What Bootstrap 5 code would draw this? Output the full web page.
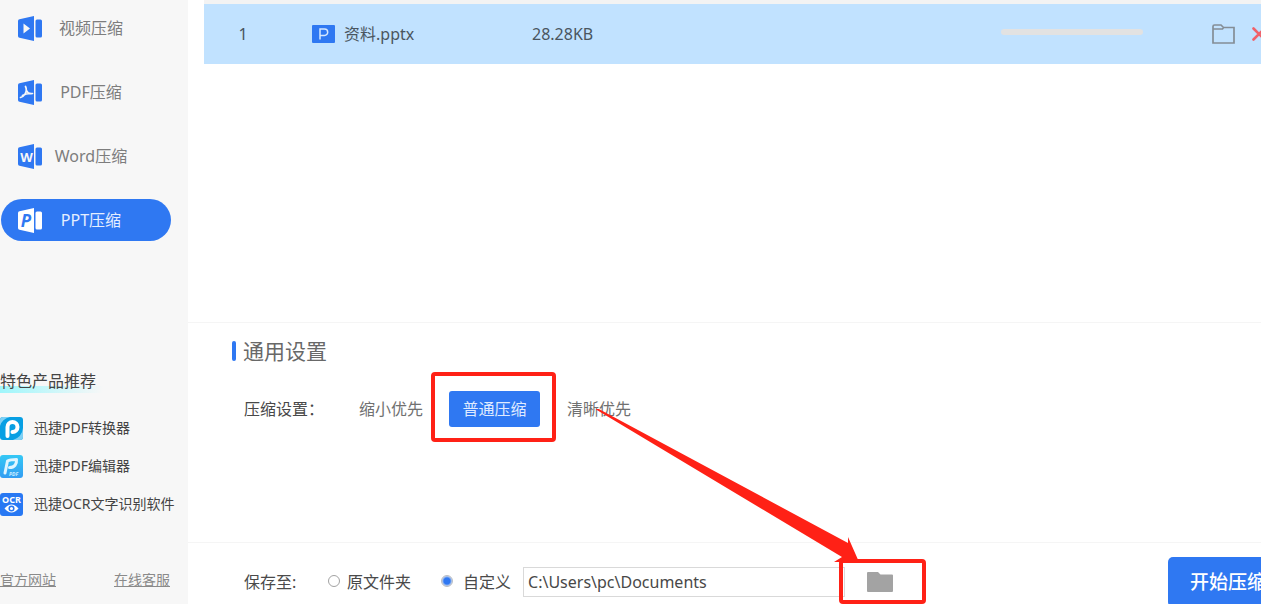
<!DOCTYPE html>
<html lang="zh-CN">
<head>
<meta charset="utf-8">
<meta name="viewport" content="width=device-width, initial-scale=1">
<title>PPT压缩</title>
<link href="https://cdn.jsdelivr.net/npm/bootstrap@5.3.0/dist/css/bootstrap.min.css" rel="stylesheet">
<style>
  :root { --brand: #2f78f2; --alert: #ff2116; }
  body { font-family: "Noto Sans", "Noto Sans CJK SC", sans-serif; font-size: 16px; line-height: 24px; color: #4a4a4a; background: #fff; }
  svg text { font-family: "Noto Sans", sans-serif; font-weight: 700; }
  .side { width: 188px; background: #f7f7f7; padding: 7px 0 12px; }
  .side-nav { gap: 22px; }
  .side-nav .nav-link { width: 170px; height: 42px; margin-left: 1px; padding: 0 17px; border-radius: 21px; color: #7d7d7d; display: flex; align-items: center; }
  .side-nav .nav-link span { flex: 1; text-align: center; padding-right: 14px; }
  .side-nav .nav-link.active { background: var(--brand); color: #e4eeff; }
  .book { width: 24px; height: 25px; fill: var(--brand); color: #f7f7f7; }
  .active .book { fill: #fff; color: var(--brand); }
  .promo-title { width: 103px; color: #444; background: linear-gradient(90deg, #9ff6fb, #f7f7f7) bottom / 100% 7px no-repeat; }
  .promo a { height: 38px; gap: 11px; font-size: 14px; color: #444; }
  .promo svg { width: 23px; height: 23px; }
  .side-foot { font-size: 14px; margin-top: 45px; padding-right: 18px; }
  .side-foot a { color: #8a8a8a; }
  .content { padding-left: 16px; }
  .list-area { border-top: 4px solid #f3f3f3; }
  .files { table-layout: fixed; }
  .files td { height: 60px; padding: 0; background: #c1e2ff; vertical-align: middle; border: 0; color: #4a5560; }
  .c-no { width: 78px; } .c-name { width: 250px; } .c-bar { width: 211px; } .c-act { width: 49px; }
  .files .name { padding-left: 30px; }
  .files .progress { width: 142px; height: 6px; margin-bottom: 5px; background: #e2e2e2; }
  .icon-btn { border: 0; background: none; padding: 0; line-height: 0; }
  .actions { gap: 17px; }
  .settings, .footer-bar { border-top: 1px solid #f5f5f5; margin-left: -16px; padding-left: 56px; }
  .settings { height: 220px; padding-top: 16px; }
  .footer-bar { height: 62px; padding-top: 14px; }
  .settings h1 { font-size: 21px; line-height: 24px; color: #686868; margin: 0 0 28px -12px; }
  .settings h1::before { content: ""; width: 4px; height: 20px; border-radius: 2px; background: var(--brand); margin-right: 7px; }
  .opt { border: 0; background: none; padding: 0; color: #707070; height: 36px; white-space: nowrap; }
  .opt.chosen { width: 91px; background: var(--brand); color: #dfeaff; border-radius: 3px; }
  .opt-wrap { margin: 0 27px 0 26px; }
  .lbl { width: 115px; color: #484848; }
  .marker { position: absolute; border: 4px solid var(--alert); border-radius: 4px; pointer-events: none; }
  .marker-opt { inset: -19px -16px -15px -18px; }
  .marker-dir { inset: -8px 0 -7px 0; }
  .arrow { position: absolute; left: 408px; top: 86px; width: 270px; height: 155px; pointer-events: none; z-index: 2; }
  .save-form { padding-top: 10px; }
  .save-to { width: 84px; }
  .save input[type=radio] { appearance: none; width: 12px; height: 12px; margin: 0 7px 3px 0; border: 1px solid #a2a2a2; border-radius: 50%; background: #fff; }
  .save label + input[type=radio] { margin-left: 30px; }
  .save input[type=radio]:checked { margin-right: 10px; border-color: #b9bcc2; background: radial-gradient(var(--brand) 3px, #c5d4ee 5px); }
  .save .path { width: 322px; height: 30px; margin-left: 12px; padding: 0 4px; border: 1px solid #d9d9d9; border-radius: 0; color: #484848; font-size: 16px; }
  .dir-btn { width: 87px; height: 30px; padding-right: 5px; }
  .dir-pick { margin-left: -6px; }
  .start { width: 120px; height: 50px; flex: none; margin-right: -27px; border: 0; border-radius: 5px; background: var(--brand); color: #fff; font-size: 19px; font-weight: 500; }
</style>
</head>
<body class="vh-100 overflow-hidden">
<div class="d-flex h-100">
  <aside class="side d-flex flex-column flex-shrink-0">
    <nav class="nav flex-column side-nav">
      <a class="nav-link" href="#"><svg class="book" viewBox="0 0 24 25"><path d="M1.500 3.200 16 0v25L1.500 21.800Q0 21.500 0 20V5Q0 3.500 1.500 3.200z"/><rect x="17.500" y="3.500" width="6.500" height="18" rx="1.500"/><path fill="currentColor" d="M5.500 7.500v10l6.500-5z"/></svg><span>视频压缩</span></a>
      <a class="nav-link" href="#"><svg class="book" viewBox="0 0 24 25"><path d="M1.500 3.200 16 0v25L1.500 21.800Q0 21.500 0 20V5Q0 3.500 1.500 3.200z"/><rect x="17.500" y="3.500" width="6.500" height="18" rx="1.500"/><path fill="none" stroke="currentColor" stroke-width="1.700" stroke-linecap="round" d="M7.500 6.500c1.500 3 1 5-.5 7.500-1 1.500-2.500 3-4.500 3.500M8.500 10.500c1 2.500 3 3.500 6 3M4.500 15.500c2.500-1.500 5-2 8-2"/></svg><span>PDF压缩</span></a>
      <a class="nav-link" href="#"><svg class="book" viewBox="0 0 24 25"><path d="M1.500 3.200 16 0v25L1.500 21.800Q0 21.500 0 20V5Q0 3.500 1.500 3.200z"/><rect x="17.500" y="3.500" width="6.500" height="18" rx="1.500"/><text x="8.500" y="17.500" font-size="13" text-anchor="middle" fill="currentColor">W</text></svg><span>Word压缩</span></a>
      <a class="nav-link active" href="#" aria-current="page"><svg class="book" viewBox="0 0 24 25"><path d="M1.500 3.200 16 0v25L1.500 21.800Q0 21.500 0 20V5Q0 3.500 1.500 3.200z"/><rect x="17.500" y="3.500" width="6.500" height="18" rx="1.500"/><text x="8" y="18.500" font-size="17" font-style="italic" text-anchor="middle" fill="currentColor">P</text></svg><span>PPT压缩</span></a>
    </nav>
    <div class="promo-title mt-auto mb-3">特色产品推荐</div>
    <div class="promo d-flex flex-column">
      <a href="#" class="d-flex align-items-center text-decoration-none"><svg viewBox="0 0 23 23"><rect width="23" height="23" rx="3" fill="#079fe3"/><path fill="#7fd0f4" d="M0 9Q2 2 10 0H3Q0 0 0 3zM23 11Q22 20 13 23h7q3 0 3-3z"/><path fill="none" stroke="#fff" stroke-width="4" stroke-linecap="round" d="M7.500 19V10a5 5 0 1 1 5 5"/></svg>迅捷PDF转换器</a>
      <a href="#" class="d-flex align-items-center text-decoration-none"><svg viewBox="0 0 23 23"><defs><linearGradient id="sky" x2="0" y2="1"><stop stop-color="#35c8f5"/><stop offset="1" stop-color="#329df2"/></linearGradient></defs><rect width="23" height="23" rx="3" fill="url(#sky)"/><path fill="none" stroke="#dff5ff" stroke-width="3" stroke-linecap="round" stroke-linejoin="round" d="M5 18 7.500 6C10 4.500 13 4.500 16.500 4.500 17 9 14.500 12.500 9.500 12.500"/><text x="9" y="21" font-size="5" font-style="italic" fill="#c9ecff">PDF</text></svg>迅捷PDF编辑器</a>
      <a href="#" class="d-flex align-items-center text-decoration-none"><svg viewBox="0 0 23 23"><rect width="23" height="23" rx="3" fill="#2878f3"/><text x="11.500" y="9.500" font-size="9" text-anchor="middle" fill="#fff">OCR</text><path fill="#fff" d="M4.500 15.500Q11.500 7.500 18.500 15.500 11.500 23.500 4.500 15.500z"/><circle cx="11.500" cy="15.500" r="2.300" fill="#fff" stroke="#2878f3" stroke-width="1.500"/></svg>迅捷OCR文字识别软件</a>
    </div>
    <div class="side-foot d-flex justify-content-between"><a href="#">官方网站</a><a href="#">在线客服</a></div>
  </aside>

  <main class="content d-flex flex-column flex-grow-1 overflow-hidden">
    <section class="list-area flex-grow-1">
      <table class="files w-100">
        <colgroup><col class="c-no"><col class="c-name"><col><col class="c-bar"><col class="c-act"></colgroup>
        <tbody><tr>
          <td class="text-center">1</td>
          <td class="name"><div class="d-flex align-items-center"><svg class="me-2 flex-shrink-0" width="24" height="18" viewBox="0 0 24 18"><rect x="0" width="23" height="18" rx="1" fill="#2f78f2"/><path fill="none" stroke="#d5e7ff" stroke-width="1.500" d="M8 14.500V4h4.500a3.200 3.200 0 0 1 0 6.400H8"/></svg>资料.pptx</div></td>
          <td>28.28KB</td>
          <td><div class="progress" role="progressbar" aria-label="压缩进度" aria-valuenow="0" aria-valuemin="0" aria-valuemax="100"></div></td>
          <td><div class="actions d-flex align-items-center">
            <button class="icon-btn" aria-label="打开文件夹"><svg width="23" height="20" viewBox="0 0 23 20" fill="none" stroke="#848d96" stroke-width="1.700"><path d="M1 18V2.500Q1 1 2.500 1H9l2.500 2.500H22V19H1zM1 5h9.500l1-1.500"/></svg></button>
            <button class="icon-btn" aria-label="删除"><svg width="14" height="14" viewBox="0 0 14 14" stroke="#f0616a" stroke-width="2.600" stroke-linecap="round"><path d="M1.500 1.500l11 11M12.500 1.500l-11 11"/></svg></button>
          </div></td>
        </tr></tbody>
      </table>
    </section>

    <section class="settings position-relative">
      <h1 class="d-flex align-items-center fw-normal">通用设置</h1>
      <div class="d-flex align-items-center">
        <span class="lbl">压缩设置：</span>
        <button class="opt">缩小优先</button>
        <div class="opt-wrap position-relative">
          <button class="opt chosen">普通压缩</button><span class="marker marker-opt"></span>
        </div>
        <button class="opt">清晰优先</button>
      </div>
      <svg class="arrow" viewBox="0 0 270 155"><path fill="#ff2116" d="M-1 0 1-1 252 134 252 128 263 153H238L246 148z"/></svg>
    </section>

    <section class="footer-bar save d-flex align-items-start">
      <div class="save-form d-flex align-items-center flex-grow-1">
        <span class="save-to">保存至:</span>
        <input type="radio" name="dest" id="orig"><label for="orig">原文件夹</label>
        <input type="radio" name="dest" id="custom" checked><label for="custom">自定义</label>
        <input class="path" type="text" value="C:\Users\pc\Documents" aria-label="保存路径">
        <div class="dir-pick position-relative"><button class="icon-btn dir-btn" aria-label="选择文件夹"><svg width="26" height="20" viewBox="0 0 26 20"><path fill="#a3a3a3" d="M0 1Q0 0 1 0h10l2.500 2.500H25q1 0 1 1V19q0 1-1 1H1q-1 0-1-1z"/></svg></button><span class="marker marker-dir"></span></div>
      </div>
      <button class="start">开始压缩</button>
    </section>
  </main>
</div>
<script src="https://cdn.jsdelivr.net/npm/bootstrap@5.3.0/dist/js/bootstrap.bundle.min.js"></script>
</body>
</html>
